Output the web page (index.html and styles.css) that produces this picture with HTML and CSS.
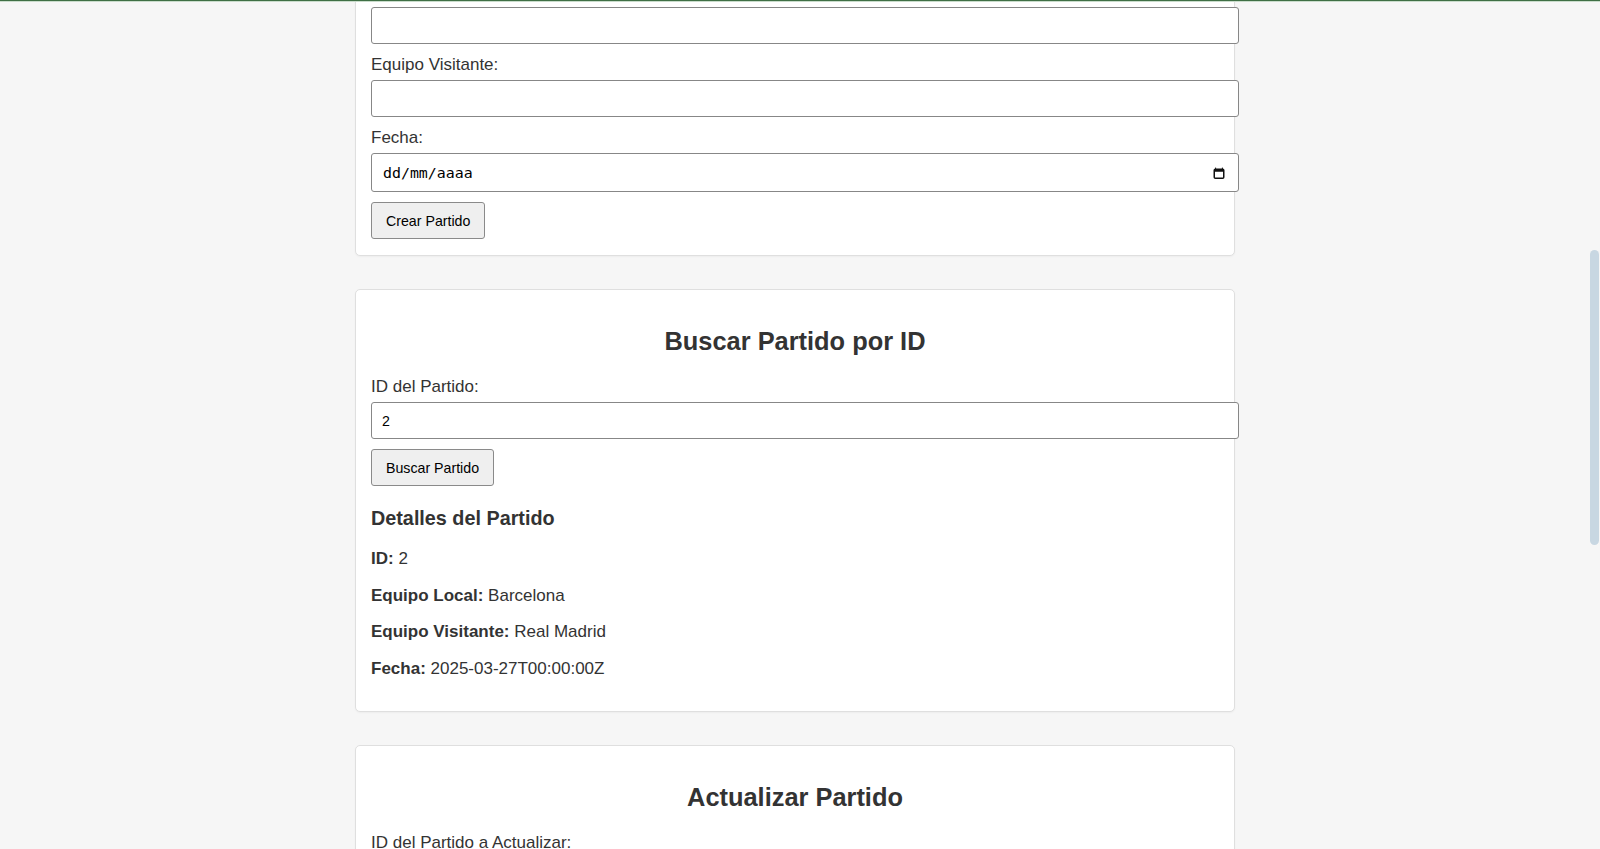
FILE: index.html
```html
<!DOCTYPE html>
<html lang="es">
<head>
<meta charset="utf-8">
<title>Gestión de Partidos</title>
<link rel="stylesheet" href="styles.css">
</head>
<body>
<div class="topline"></div>
<div class="scroll-thumb"></div>
<main class="page">
  <section class="card">
    <h2>Crear Partido</h2>
    <label>Equipo Local:</label>
    <input class="field" type="text">
    <label>Equipo Visitante:</label>
    <input class="field" type="text">
    <label>Fecha:</label>
    <div class="field date-field">
      <span class="date-text">dd/mm/aaaa</span>
      <svg class="cal-icon" width="12" height="12" viewBox="0 0 12 12" aria-hidden="true">
        <rect x="1.25" y="2.25" width="9.5" height="9" rx="1" fill="none" stroke="#111" stroke-width="1.5"/>
        <rect x="1.25" y="2.25" width="9.5" height="2.5" fill="#111"/>
        <line x1="2.6" y1="0.6" x2="2.6" y2="2.5" stroke="#111" stroke-width="1"/>
        <line x1="9.4" y1="0.6" x2="9.4" y2="2.5" stroke="#111" stroke-width="1"/>
      </svg>
    </div>
    <button class="btn" type="button">Crear Partido</button>
  </section>

  <section class="card">
    <h2>Buscar Partido por ID</h2>
    <label>ID del Partido:</label>
    <input class="field" type="text" value="2">
    <button class="btn" type="button">Buscar Partido</button>
    <div class="details">
      <h3>Detalles del Partido</h3>
      <p><strong>ID:</strong> 2</p>
      <p><strong>Equipo Local:</strong> Barcelona</p>
      <p><strong>Equipo Visitante:</strong> Real Madrid</p>
      <p><strong>Fecha:</strong> 2025-03-27T00:00:00Z</p>
    </div>
  </section>

  <section class="card">
    <h2>Actualizar Partido</h2>
    <label>ID del Partido a Actualizar:</label>
    <input class="field" type="text">
    <label>Equipo Local:</label>
    <input class="field" type="text">
  </section>
</main>
</body>
</html>
```

FILE: styles.css
```css
html, body {
  margin: 0;
  padding: 0;
}

body {
  background: #f6f6f6;
  color: #333;
  font-family: "Liberation Sans", Arial, Helvetica, sans-serif;
  font-size: 17px;
  padding-right: 10px;
  overflow: hidden;
}

.topline {
  position: fixed;
  top: 0;
  left: 0;
  right: 0;
  height: 2px;
  background: linear-gradient(to bottom, #3f6f45 0, #3f6f45 1px, #c9dccb 1px, #c9dccb 2px);
  z-index: 5;
}

.scroll-thumb {
  position: fixed;
  top: 250px;
  right: 1px;
  width: 9px;
  height: 295px;
  border-radius: 5px;
  background: #c8d7e2;
  z-index: 5;
}

.page {
  width: 880px;
  margin: -106px auto 0;
}

.card {
  box-sizing: border-box;
  width: 880px;
  background: #fff;
  border: 1px solid #dfdfdf;
  border-radius: 5px;
  box-shadow: 0 1px 2px rgba(0, 0, 0, 0.04);
  padding: 15px 15px 16px;
  margin-bottom: 33px;
}

.card h2 {
  font-size: 25.4px;
  line-height: 29px;
  font-weight: bold;
  text-align: center;
  color: #333;
  margin: 22px 0 20px;
}

.card label {
  display: block;
  line-height: 21px;
  margin-bottom: 5px;
  color: #333;
}

.field {
  box-sizing: border-box;
  display: block;
  width: calc(100% + 20px);
  height: 37px;
  padding: 0 10px;
  margin: 0 0 10px;
  border: 1px solid #878787;
  border-radius: 3px;
  background: #fff;
  font-family: "Liberation Sans", Arial, sans-serif;
  font-size: 14.2px;
  color: #000;
  outline: none;
}

.date-field {
  display: flex;
  align-items: center;
  justify-content: space-between;
  height: 39px;
  padding: 0 13px 0 11px;
}

.date-text {
  font-family: "DejaVu Sans Mono", "Liberation Mono", monospace;
  font-size: 14.9px;
  color: #000;
}

.cal-icon {
  display: block;
  margin-top: 1px;
}

.btn {
  display: block;
  height: 37px;
  padding: 0 14px;
  margin: 1px 0 0;
  background: #efefef;
  border: 1px solid #8a8a8a;
  border-radius: 3px;
  font-family: "Liberation Sans", Arial, sans-serif;
  font-size: 14.2px;
  color: #000;
}

.details h3 {
  font-size: 19.8px;
  line-height: 22px;
  font-weight: bold;
  color: #333;
  margin: 21px 0 20px;
}

.details p {
  line-height: 20px;
  margin: 16.6px 0;
  color: #333;
}

.details strong {
  font-weight: bold;
}
```
